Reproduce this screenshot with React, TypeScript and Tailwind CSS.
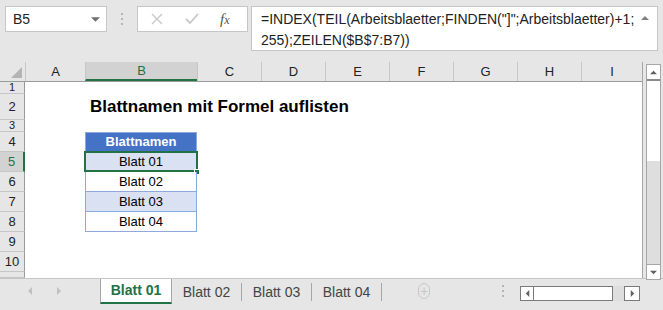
const cols = [
  { l: "A", w: "w-[60px]" },
  { l: "B", w: "w-[112px]" },
  { l: "C", w: "w-[64px]" },
  { l: "D", w: "w-[64px]" },
  { l: "E", w: "w-[64px]" },
  { l: "F", w: "w-[64px]" },
  { l: "G", w: "w-[64px]" },
  { l: "H", w: "w-[64px]" },
  { l: "I", w: "flex-1" },
];

const rows = [
  { n: "1", h: "h-[12px]" },
  { n: "2", h: "h-[26px]" },
  { n: "3", h: "h-[12px]" },
  { n: "4", h: "h-[20px]" },
  { n: "5", h: "h-[20px]" },
  { n: "6", h: "h-[20px]" },
  { n: "7", h: "h-[20px]" },
  { n: "8", h: "h-[20px]" },
  { n: "9", h: "h-[20px]" },
  { n: "10", h: "h-[20px]" },
  { n: "", h: "h-[6px]" },
];

const Tri = ({ dir, color = "#606060", size = 7 }: { dir: "up" | "down" | "left" | "right"; color?: string; size?: number }) => {
  const pts = {
    up: "0,6 4,2 8,6",
    down: "0,2 4,6 8,2",
    left: "6,0 2,4 6,8",
    right: "2,0 6,4 2,8",
  }[dir];
  return (
    <svg width={size} height={size} viewBox="0 0 8 8">
      <polygon points={pts} fill={color} />
    </svg>
  );
};

const Dots = () => (
  <div className="flex flex-col gap-[3px]">
    <div className="w-[2px] h-[2px] bg-[#b4b4b4]" />
    <div className="w-[2px] h-[2px] bg-[#b4b4b4]" />
    <div className="w-[2px] h-[2px] bg-[#b4b4b4]" />
  </div>
);

function Cell({ row, col }: { row: string; col: string }) {
  if (row === "2" && col === "B") {
    return (
      <div className="relative h-full">
        <span className="absolute left-[5px] top-[3px] whitespace-nowrap text-[17px] font-bold text-black leading-[20px] z-10">
          Blattnamen mit Formel auflisten
        </span>
      </div>
    );
  }
  if (col === "B" && row === "4") {
    return (
      <div className="h-full bg-[#4472c4] border border-[#8ea9db] flex items-center justify-center text-white font-bold text-[13px]">
        Blattnamen
      </div>
    );
  }
  if (col === "B" && ["5", "6", "7", "8"].includes(row)) {
    const shaded = row === "5" || row === "7";
    return (
      <div
        className={`relative h-full border-x border-b border-[#8ea9db] flex items-center justify-center text-[13px] text-black ${
          shaded ? "bg-[#d9e1f2]" : "bg-white"
        }`}
      >
        Blatt 0{Number(row) - 4}
        {row === "5" && (
          <>
            <div className="absolute -left-[2px] -top-[1px] -right-[2px] -bottom-[1px] border-2 border-[#217346]" />
            <div className="absolute -right-[4px] -bottom-[4px] w-[6px] h-[6px] bg-[#217346] border border-white" />
          </>
        )}
      </div>
    );
  }
  return <div className="h-full" />;
}

export default function App() {
  return (
    <div className="w-[663px] h-[310px] bg-[#e6e6e6] overflow-hidden font-['Liberation_Sans',Arial,sans-serif] text-[#222]">
      {/* formula bar */}
      <div className="h-[62px] flex items-start pt-[6px] pl-[5px]">
        <div className="w-[102px] h-[26px] bg-white border border-[#c6c6c6] flex items-center justify-between pl-[7px] pr-[6px] text-[14px]">
          <span>B5</span>
          <Tri dir="down" color="#707070" size={9} />
        </div>
        <div className="w-[30px] h-[26px] flex items-center justify-center">
          <Dots />
        </div>
        <div className="w-[111px] h-[26px] bg-white border border-[#c6c6c6] flex items-center">
          <svg width="12" height="12" viewBox="0 0 12 12" className="ml-[13px]">
            <path d="M1 1 L11 11 M11 1 L1 11" stroke="#c8c8c8" strokeWidth="1.4" />
          </svg>
          <svg width="14" height="12" viewBox="0 0 14 12" className="ml-[22px]">
            <path d="M1 6 L5 10 L13 1" stroke="#c8c8c8" strokeWidth="1.8" fill="none" />
          </svg>
          <span className="ml-[21px] font-['Liberation_Serif',serif] italic text-[15px] text-[#555]">
            f<span className="text-[12px]">x</span>
          </span>
        </div>
        <div className="ml-[3px] w-[407px] h-[45px] bg-white border border-[#c6c6c6] flex justify-between pl-[9px] pr-[8px] pt-[2px]">
          <div className="text-[14px] leading-[21px] text-[#222]">
            <div>=INDEX(TEIL(Arbeitsblaetter;FINDEN("]";Arbeitsblaetter)+1;</div>
            <div>255);ZEILEN($B$7:B7))</div>
          </div>
          <div className="pt-[5px]">
            <Tri dir="up" color="#808080" size={8} />
          </div>
        </div>
      </div>

      {/* sheet */}
      <div className="flex h-[216px]">
        <div className="w-[643px] h-full flex flex-col border-r border-[#a6a6a6] bg-white">
          <div className="h-[20px] flex border-b border-[#9b9b9b] bg-[#e6e6e6] text-[13px]">
            <div className="w-[25px] h-full flex items-end justify-end pr-[3px] pb-[3px]">
              <svg width="11" height="11" viewBox="0 0 11 11">
                <polygon points="11,0 11,11 0,11" fill="#b4b4b4" />
              </svg>
            </div>
            {cols.map((c) => (
              <div
                key={c.l}
                className={`${c.w} h-full flex items-center justify-center border-l ${
                  c.l === "B"
                    ? "bg-[#d2d2d2] text-[#217346] border-b-2 border-b-[#217346] border-l-[#c6c6c6]"
                    : "border-[#c6c6c6]"
                }`}
              >
                {c.l}
              </div>
            ))}
          </div>
          {rows.map((r) => (
            <div key={r.n || "x"} className={`${r.h} flex`}>
              <div
                className={`w-[25px] h-full flex items-center justify-center leading-none border-b border-[#c6c6c6] ${
                  r.h === "h-[12px]" ? "text-[11px]" : "text-[13px]"
                } ${
                  r.n === "5"
                    ? "bg-[#d2d2d2] text-[#217346] border-r-2 border-r-[#217346]"
                    : "bg-[#e6e6e6] border-r border-r-[#9b9b9b]"
                }`}
              >
                {r.n}
              </div>
              {cols.map((c) => (
                <div key={c.l} className={`${c.w} h-full`}>
                  <Cell row={r.n} col={c.l} />
                </div>
              ))}
            </div>
          ))}
        </div>
        <div className="ml-[3px] mt-[2px] w-[15px] h-[216px] border border-[#a6a6a6] bg-[#dedede] flex flex-col">
          <div className="h-[14px] bg-white flex items-center justify-center">
            <Tri dir="up" />
          </div>
          <div className="h-[82px] bg-white border-t-2 border-[#8a8a8a]" />
          <div className="flex-1" />
          <div className="h-[15px] bg-white border-t border-[#a6a6a6] flex items-center justify-center">
            <Tri dir="down" />
          </div>
        </div>
      </div>

      {/* sheet tabs */}
      <div className="h-[32px] border-t border-[#c6c6c6] flex items-start text-[14px]">
        <div className="w-[100px] h-[24px] flex items-center pl-[26px] gap-[21px]">
          <Tri dir="left" color="#c0c0c0" size={8} />
          <Tri dir="right" color="#c0c0c0" size={8} />
        </div>
        <div className="w-[72px] h-[25px] bg-white border-x border-[#a6a6a6] border-b-2 border-b-[#217346] flex items-center justify-center font-bold text-[#217346]">
          Blatt 01
        </div>
        {["Blatt 02", "Blatt 03", "Blatt 04"].map((t) => (
          <div key={t} className="w-[70px] h-[24px] flex items-center mt-[1px]">
            <div className="flex-1 text-center text-[#444]">{t}</div>
            <div className="w-px h-[18px] bg-[#a6a6a6]" />
          </div>
        ))}
        <div className="w-[122px] h-[24px] flex items-center pl-[36px]">
          <div className="w-[16px] h-[16px] rounded-full border border-[#c8c8c8] flex items-center justify-center text-[#c8c8c8] text-[14px] leading-none">
            +
          </div>
          <div className="ml-[72px]">
            <Dots />
          </div>
        </div>
        <div className="mt-[7px] ml-[16px] w-[120px] h-[15px] flex bg-[#dedede]">
          <div className="w-[14px] h-full bg-white border border-[#7a7a7a] flex items-center justify-center">
            <Tri dir="left" />
          </div>
          <div className="w-[79px] h-full bg-white border-y border-r border-[#7a7a7a]" />
          <div className="flex-1" />
          <div className="w-[16px] h-full bg-white border border-[#7a7a7a] flex items-center justify-center">
            <Tri dir="right" />
          </div>
        </div>
      </div>
    </div>
  );
}
